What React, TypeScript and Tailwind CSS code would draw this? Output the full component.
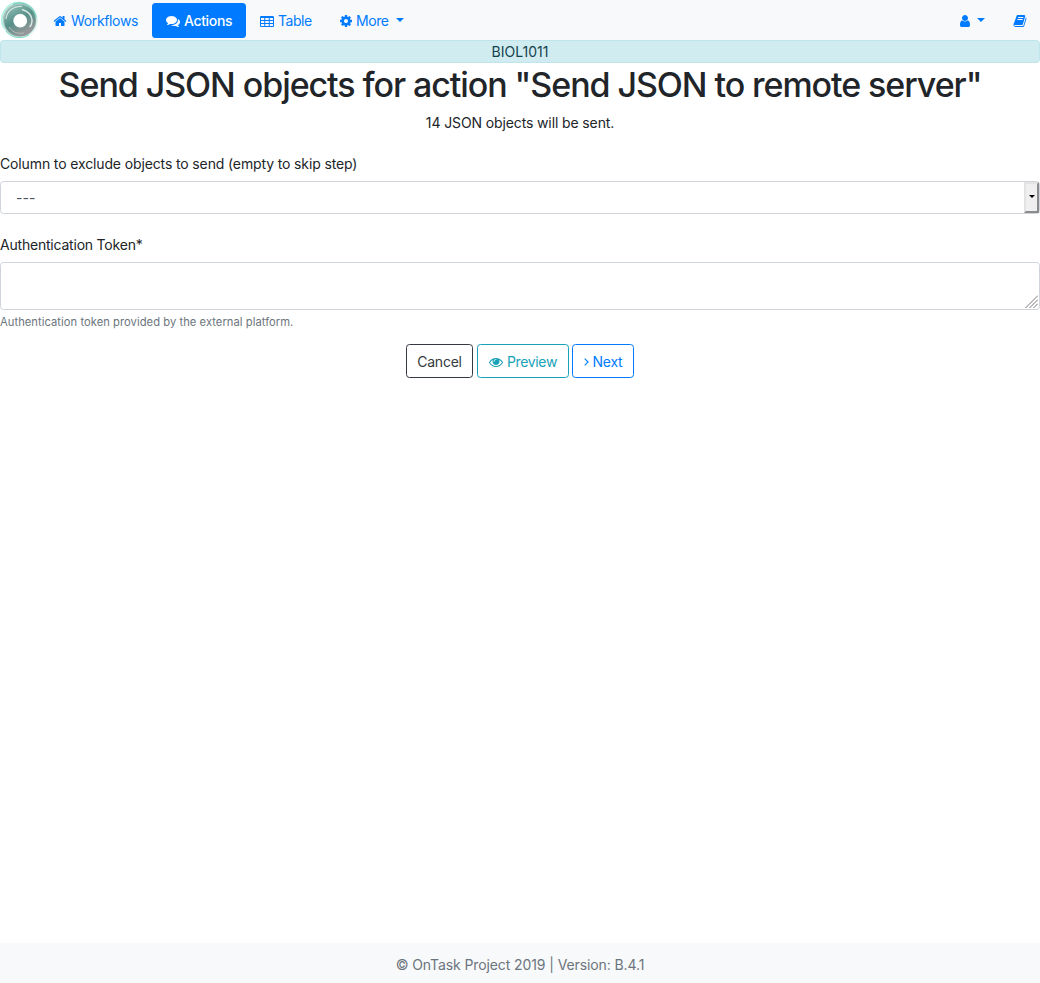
import type { ReactNode } from "react";

const HOME =
  "M1472 992v480q0 26-19 45t-45 19h-384v-384h-256v384h-384q-26 0-45-19t-19-45v-480q0-1 .5-3t.5-3l575-474 575 474q1 2 1 6zm223-69l-62 74q-8 9-21 11h-3q-13 0-21-7l-692-577-692 577q-12 8-24 7-13-2-21-11l-62-74q-8-10-7-23.5t11-21.5l719-599q32-26 76-26t76 26l244 204v-195q0-14 9-23t23-9h192q14 0 23 9t9 23v408l219 182q10 8 11 21.5t-7 23.5z";
const COMMENTS =
  "M1408 768q0 139-94 257t-256.5 186.5-353.5 68.5q-86 0-176-16-124 88-278 128-36 9-86 16h-3q-11 0-20.5-8t-11.5-21q-1-3-1-6.5t.5-6.5 2-6l2.5-5 3.5-5.5 4-5 4.5-5 4-4.5q5-6 23-25t26-29.5 22.5-29 25-38.5 20.5-44q-124-72-195-177t-71-224q0-139 94-257t256.5-186.5 353.5-68.5 353.5 68.5 256.5 186.5 94 257zm384 256q0 120-71 224.5t-195 176.5q10 24 20.5 44t25 38.5 22.5 29 26 29.5 23 25q1 1 4 4.5t4.5 5 4 5 3.5 5.5l2.5 5 2 6 .5 6.5-1 6.5q-3 14-13 22t-22 7q-50-7-86-16-154-40-278-128-90 16-176 16-271 0-472-132 58 4 88 4 161 0 309-45t264-129q125-92 192-212t67-254q0-77-23-152 129 71 204 178t75 230z";
const TABLE =
  "M160 256h1472q66 0 113 47t47 113v1088q0 66-47 113t-113 47h-1472q-66 0-113-47t-47-113v-1088q0-66 47-113t113-47zM128 512v256h416v-256zM672 512v256h448v-256zM1248 512v256h416v-256zM128 896v256h416v-256zM672 896v256h448v-256zM1248 896v256h416v-256zM128 1280v224q0 32 32 32h384v-256zM672 1280v256h448v-256zM1248 1280v256h384q32 0 32-32v-224z";
const COG =
  "M1152 896q0-106-75-181t-181-75-181 75-75 181 75 181 181 75 181-75 75-181zm512-109v222q0 12-8 23t-20 13l-185 28q-19 54-39 91 35 50 107 138 10 12 10 25t-9 23q-27 37-99 108t-94 71q-12 0-26-9l-138-108q-44 23-91 38-16 136-29 186-7 28-36 28h-222q-14 0-24.5-8.5t-11.5-21.5l-28-184q-49-16-90-37l-141 107q-10 9-25 9-14 0-25-11-126-114-165-168-7-10-7-23 0-12 8-23 15-21 51-66.5t54-70.5q-27-50-41-99l-183-27q-13-2-21-12.5t-8-23.5v-222q0-12 8-23t19-13l186-28q14-46 39-92-40-57-107-138-10-12-10-24 0-10 9-23 26-36 98.5-107.5t94.5-71.5q13 0 26 10l138 107q44-23 91-38 16-136 29-186 7-28 36-28h222q14 0 24.5 8.5t11.5 21.5l28 184q49 16 90 37l142-107q9-9 24-9 13 0 25 10 129 119 165 170 7 8 7 22 0 12-8 23-15 21-51 66.5t-54 70.5q26 50 41 98l183 28q13 2 21 12.5t8 23.5z";
const USER =
  "M1536 1399q0 109-62.5 187t-150.5 78h-854q-88 0-150.5-78t-62.5-187q0-85 8.5-160.5t31.5-152 58.5-131 94-89 134.5-34.5q131 128 313 128t313-128q76 0 134.5 34.5t94 89 58.5 131 31.5 152 8.5 160.5zm-256-887q0 159-112.5 271.5t-271.5 112.5-271.5-112.5-112.5-271.5 112.5-271.5 271.5-112.5 271.5 112.5 112.5 271.5z";
const BOOK =
  "M1703 478q40 57 18 129l-275 906q-19 64-76.5 107.5t-122.5 43.5h-923q-77 0-148.5-53.5t-99.5-131.5q-24-67-2-127 0-4 3-27t4-37q1-8-3-21.5t-3-19.5q2-11 8-21t16.5-23.5 16.5-23.5q23-38 45-91.5t30-91.5q3-10 .5-30t-.5-28q3-11 17-28t17-23q21-36 42-92t25-90q1-9-2.5-32t.5-28q4-13 22-30.5t22-22.5q19-26 42.5-84.5t27.5-96.5q1-8-3-25.5t-2-26.5q2-8 9-18t18-23 17-21q8-12 16.5-30.5t15-35 16-36 19.5-32 26.5-23.5 36-11.5 47.5 5.5l-1 3q38-9 51-9h761q74 0 114 56t18 130l-274 906q-36 119-71.5 153.5t-128.5 34.5h-869q-27 0-38 15-11 16-1 43 24 70 144 70h923q29 0 56-15.5t35-41.5l300-987q7-22 5-57 38 15 59 43zm-1064 2q-4 13 2 22.5t20 9.5h608q13 0 25.5-9.5t16.5-22.5l21-64q4-13-2-22.5t-20-9.5h-608q-13 0-25.5 9.5t-16.5 22.5zm-83 256q-4 13 2 22.5t20 9.5h608q13 0 25.5-9.5t16.5-22.5l21-64q4-13-2-22.5t-20-9.5h-608q-13 0-25.5 9.5t-16.5 22.5z";
const EYE =
  "M1664 960q-152-236-381-353 61 104 61 225 0 185-131.5 316.5t-316.5 131.5-316.5-131.5-131.5-316.5q0-121 61-225-229 117-381 353 133 205 333.5 326.5t434.5 121.5 434.5-121.5 333.5-326.5zm-720-384q0-20-14-34t-34-14q-125 0-214.5 89.5t-89.5 214.5q0 20 14 34t34 14 34-14 14-34q0-86 61-147t147-61q20 0 34-14t14-34zm848 384q0 34-20 69-140 230-376.5 368.5t-499.5 138.5-499.5-139-376.5-368q-20-35-20-69t20-69q140-229 376.5-368t499.5-139 499.5 139 376.5 368q20 35 20 69z";

function Icon({ d, className = "" }: { d: string; className?: string }) {
  return (
    <svg viewBox="0 0 1792 1792" className={`mt-px size-[14px] shrink-0 ${className}`} fill="currentColor" fillRule="evenodd">
      <path d={d} />
    </svg>
  );
}

function Caret({ className = "" }: { className?: string }) {
  return (
    <svg viewBox="0 0 8 4" className={`h-[4px] w-[8px] shrink-0 ${className}`} fill="currentColor">
      <path d="M0 0h8L4 4z" />
    </svg>
  );
}

function Logo() {
  return (
    <svg viewBox="0 0 40 40" className="size-10 shrink-0 bg-white">
      <defs>
        <linearGradient id="ring" x1="0.2" y1="0" x2="0.75" y2="1">
          <stop offset="0" stopColor="#7fb0a8" />
          <stop offset=".45" stopColor="#569089" />
          <stop offset="1" stopColor="#939799" />
        </linearGradient>
      </defs>
      <circle cx="19.5" cy="20" r="18.3" fill="#d8f5ee" />
      <circle cx="19.5" cy="20" r="16.8" fill="#b0c6c2" />
      <circle cx="20" cy="20.5" r="11.3" fill="none" stroke="url(#ring)" strokeWidth="9" />
      <path d="M4 28A17.3 17.3 0 0 1 20 2.5" fill="none" stroke="#b5f0e4" strokeWidth="1.8" />
      <path d="M6 31A17.5 17.5 0 0 0 29 35" fill="none" stroke="#7fdcc8" strokeWidth="1" />
      <path d="M13 4.5A16.5 16.5 0 0 1 36 18" fill="none" stroke="#7ecfbf" strokeWidth="1.4" />
      <path d="M6 19A14 14 0 0 1 22 6.5" fill="none" stroke="#d3e4e0" strokeWidth="1.2" />
      <path d="M22 9.5Q31 12 32 20Q32 25 29.5 27" fill="none" stroke="#d7e8e4" strokeWidth="1.5" />
      <path d="M9 27Q14 35 24 33" fill="none" stroke="#b5b9bb" strokeWidth="1" />
      <circle cx="20.3" cy="20.7" r="6.8" fill="#fff" />
    </svg>
  );
}

function NavItem({ icon, children, className }: { icon: string; children: ReactNode; className: string }) {
  return (
    <a href="#" className={`flex h-[35px] items-center rounded-[3.5px] whitespace-nowrap ${className}`}>
      <Icon d={icon} />
      {children}
    </a>
  );
}

export default function App() {
  return (
    <div className="flex h-[983px] w-[1040px] flex-col bg-white font-['Inter',sans-serif] text-[14px] leading-[21px] text-[#212529]">
      <nav className="flex h-10 shrink-0 items-center bg-[#f8f9fa] text-[#007bff]">
        <Logo />
        <NavItem icon={HOME} className="w-[112px] gap-[4px] pl-[13px] tracking-[-0.35px]">
          <span className="pt-px">Workflows</span>
        </NavItem>
        <NavItem icon={COMMENTS} className="w-[94px] gap-[4px] bg-[#007bff] pl-[14px] tracking-[-0.35px] text-white">
          <span className="pt-px font-medium">Actions</span>
        </NavItem>
        <NavItem icon={TABLE} className="w-[79px] gap-[4px] pl-[14px] tracking-[-0.45px]">
          <span className="pt-px">Table</span>
        </NavItem>
        <NavItem icon={COG} className="w-[80px] gap-[3px] pl-[14px] tracking-[-0.45px]">
          <span className="pt-px">More</span>
          <Caret className="ml-[5px]" />
        </NavItem>
        <div className="ml-auto flex items-center pr-[13px]">
          <Icon d={USER} />
          <Caret className="ml-[5px]" />
          <Icon d={BOOK} className="ml-[28px]" />
        </div>
      </nav>

      <div className="flex h-[23px] shrink-0 items-center justify-center rounded-[3.5px] border border-[#bee5eb] bg-[#d1ecf1] text-[#14424c]">
        BIOL1011
      </div>

      <main className="grow">
        <h1 className="pt-px text-center text-[34px] leading-[42px] font-medium tracking-[-1.07px] whitespace-nowrap">
          Send JSON objects for action "Send JSON to remote server"
        </h1>
        <p className="mt-[6px] text-center tracking-[-0.12px]">14 JSON objects will be sent.</p>

        <form>
          <label className="mt-[20px] block tracking-[-0.13px]">Column to exclude objects to send (empty to skip step)</label>
          <div className="mt-[7px] flex h-[33px] items-center justify-between rounded-[3.5px] border border-[#ced4da] pl-[15px] text-[#495057]">
            <span>---</span>
            <span className="flex h-[31px] w-[15px] items-center justify-center border-2 border-t-[#e3e3e3] border-r-[#8b8b8b] border-b-[#8b8b8b] border-l-[#e3e3e3] bg-[#efefef] pb-[2px] text-black">
              <svg viewBox="0 0 6 3" className="h-[3px] w-[6px] shrink-0" fill="currentColor">
                <path d="M0 0h6L3 3z" />
              </svg>
            </span>
          </div>

          <label className="mt-[20px] block tracking-[-0.21px]">Authentication Token*</label>
          <div className="mt-[7px] flex h-[48px] items-end justify-end rounded-[3.5px] border border-[#ced4da] p-[1px]">
            <svg viewBox="0 0 13 13" className="size-[13px]" fill="none" stroke="#777" strokeWidth="1">
              <path d="M0.5 13L13 .5M4.5 13L13 4.5M8.5 13L13 8.5" />
            </svg>
          </div>
          <small className="mt-[4px] block text-[11.2px] leading-[17px] tracking-[0.045px] text-[#6c757d]">
            Authentication token provided by the external platform.
          </small>

          <div className="mt-[13px] flex justify-center gap-[4px]">
            <button type="button" className="h-[34px] w-[67px] rounded-[3.5px] border border-[#343a40] tracking-[-0.25px] text-[#343a40]">
              Cancel
            </button>
            <button type="button" className="flex h-[34px] w-[92px] items-center justify-center gap-[4px] rounded-[3.5px] border border-[#17a2b8] tracking-[-0.35px] text-[#17a2b8]">
              <Icon d={EYE} />
              Preview
            </button>
            <button type="button" className="-ml-px flex h-[34px] w-[62px] items-center justify-center gap-[4px] rounded-[3.5px] border border-[#007bff] tracking-[-0.25px] text-[#007bff]">
              <svg viewBox="0 0 5 8" className="mt-[2px] h-[8px] w-[5px] shrink-0" fill="none" stroke="currentColor" strokeWidth="1.1">
                <path d="M.7.7L4.1 4L.7 7.3" />
              </svg>
              Next
            </button>
          </div>
        </form>
      </main>

      <footer className="flex h-10 shrink-0 items-center justify-center bg-[#f8f9fa] tracking-[-0.1px] text-[#6c757d]">
        <span className="pt-[2px]">© OnTask Project 2019 | Version: B.4.1</span>
      </footer>
    </div>
  );
}
